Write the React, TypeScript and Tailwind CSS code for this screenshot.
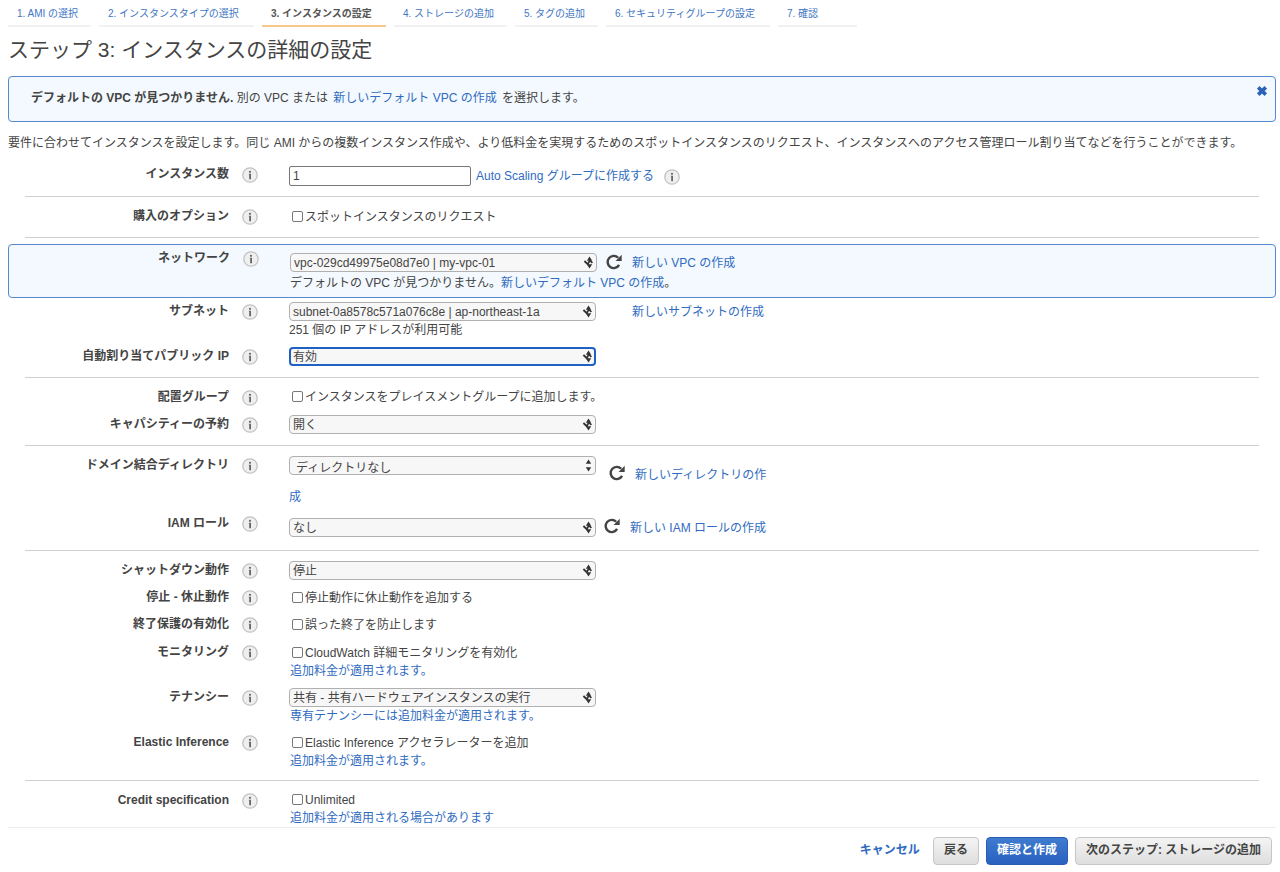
import { useId, type ReactNode } from "react";

const steps = [
  { label: "1. AMI の選択", width: "w-[83px]" },
  { label: "2. インスタンスタイプの選択", width: "w-[155px]" },
  { label: "3. インスタンスの設定", width: "w-[124px]", current: true },
  { label: "4. ストレージの追加", width: "w-[113px]" },
  { label: "5. タグの追加", width: "w-[83px]" },
  { label: "6. セキュリティグループの設定", width: "w-[164px]" },
  { label: "7. 確認", width: "w-[79px]" },
];

function Link({ children, className = "" }: { children: ReactNode; className?: string }) {
  return (
    <a href="#" className={`text-[#2f6bbf] hover:underline ${className}`}>
      {children}
    </a>
  );
}

function InfoButton({ about }: { about: string }) {
  return (
    <button type="button" aria-label={about} className="size-4 shrink-0">
      <svg viewBox="0 0 16 16" className="size-4">
        <circle cx="8" cy="8" r="7.2" fill="#efefef" stroke="#c2c2c2" strokeWidth="1.3" />
        <circle cx="8" cy="4.8" r="1.1" fill="#666" />
        <path d="M6.8 6.8H9V12.2H7.2V7.6H6.8Z" fill="#666" />
      </svg>
    </button>
  );
}

function RefreshButton({ className = "" }: { className?: string }) {
  return (
    <button type="button" aria-label="更新" className={`size-4 shrink-0 ${className}`}>
      <svg viewBox="0 0 16 16" className="size-4">
        <path d="M12.2 3.8A6.1 6.1 0 1 0 13.1 10.9" fill="none" stroke="#444" strokeWidth="2.4" />
        <path d="M15.7 0.8V6.9H9.6Z" fill="#444" />
      </svg>
    </button>
  );
}

function Select({
  id,
  value,
  focused = false,
  plain = false,
  className = "",
}: {
  id: string;
  value: string;
  focused?: boolean;
  plain?: boolean;
  className?: string;
}) {
  return (
    <span className={`relative inline-block h-[19px] w-[307px] shrink-0 ${className}`}>
      <select
        id={id}
        className={`block h-[19px] w-full appearance-none rounded-[4px] bg-[#f7f7f7] pr-5 leading-[15px] ${
          plain ? "pt-1 pl-[6px]" : focused ? "pt-px pl-[2px]" : "pt-[2px] pl-[3px]"
        } ${focused ? "border-2 border-[#1f62c4]" : "border border-[#b0b0b0]"}`}
      >
        <option>{value}</option>
      </select>
      <svg viewBox="0 0 12 14" className="pointer-events-none absolute top-[3px] right-[3px] h-[14px] w-3">
        <path d="M7.5 0.6L10.2 4.8H4.8ZM7.5 12.4L10.2 8.2H4.8Z" fill="#333" />
        {!plain && (
          <path d="M2.4 5L5.8 8.2L7.8 4.4L10.4 6.8" fill="none" stroke="#333" strokeWidth="1.8" />
        )}
      </svg>
    </span>
  );
}

function Checkbox({ id, children }: { id: string; children: ReactNode }) {
  return (
    <span className="flex h-[18px] items-center gap-[2px] pl-[3px]">
      <input
        id={id}
        type="checkbox"
        className="mb-[2px] size-[11px] appearance-none rounded-[2px] border border-[#777] bg-white checked:bg-[#2f6bbf]"
      />
      <label htmlFor={id}>{children}</label>
    </span>
  );
}

function Row({
  label,
  className = "",
  children,
}: {
  label: string;
  className?: string;
  children: (id: string) => ReactNode;
}) {
  const id = useId();
  return (
    <div className={`flex items-start ${className}`}>
      <label htmlFor={id} className="w-[221px] shrink-0 pt-1 text-right font-bold">
        {label}
      </label>
      <div className="flex w-[60px] shrink-0 pt-[6px] pl-[13px]">
        <InfoButton about={label} />
      </div>
      <div className="min-w-0 flex-1">{children(id)}</div>
    </div>
  );
}

function Section({ children }: { children: ReactNode }) {
  return <section className="pb-[7px]">{children}</section>;
}

function Divider() {
  return <hr className="mr-[17px] mb-[6px] ml-[17px] border-[#cfcfcf]" />;
}

export default function App() {
  return (
    <div className="bg-white pr-1 pl-2 font-['Liberation_Sans','Noto_Sans_CJK_JP',sans-serif] text-[12px] leading-[18px] text-[#444]">
      <nav className="flex gap-2 text-[10px]">
        {steps.map((step) => (
          <a
            key={step.label}
            href="#"
            aria-current={step.current ? "step" : undefined}
            className={`h-[27px] border-b-2 pt-[5px] pl-[9px] whitespace-nowrap ${step.width} ${
              step.current ? "border-[#f7c88e] font-bold text-[#555]" : "border-[#f1f1f1] text-[#3f76c4]"
            }`}
          >
            {step.label}
          </a>
        ))}
      </nav>

      <h1 className="pt-2 text-[21px] leading-[30px]">ステップ 3: インスタンスの詳細の設定</h1>

      <div className="mt-[11px] flex h-[46px] items-start justify-between rounded-[4px] border border-[#5488d0] bg-[#f3f9fe]">
        <p className="pt-3 pl-[22px]">
          <strong>デフォルトの VPC が見つかりません.</strong> 別の VPC または{" "}
          <Link className="mx-[2px]">新しいデフォルト VPC の作成</Link> を選択します。
        </p>
        <button type="button" aria-label="閉じる" className="mt-2 mr-[7px] size-3">
          <svg viewBox="0 0 12 12" className="size-3">
            <path d="M2.2 2.4L9.8 9.6M9.8 2.4L2.2 9.6" stroke="#2b63b8" strokeWidth="3.6" />
          </svg>
        </button>
      </div>

      <p className="pt-3 pb-[9px]">
        要件に合わせてインスタンスを設定します。同じ AMI からの複数インスタンス作成や、より低料金を実現するためのスポットインスタンスのリクエスト、インスタンスへのアクセス管理ロール割り当てなどを行うことができます。
      </p>

      <Section>
        <Row label="インスタンス数" className="min-h-[28px]">
          {(id) => (
            <div className="flex items-center pt-[5px]">
              <input
                id={id}
                type="text"
                defaultValue="1"
                className="h-5 w-[182px] rounded-[2px] border border-[#777] px-[3px]"
              />
              <Link className="ml-[5px]">Auto Scaling グループに作成する</Link>
              <span className="ml-[10px] flex pt-[2px]">
                <InfoButton about="Auto Scaling グループ" />
              </span>
            </div>
          )}
        </Row>
      </Section>

      <Divider />
      <Section>
        <Row label="購入のオプション" className="min-h-[27px]">
          {(id) => (
            <div className="pt-[5px]">
              <Checkbox id={id}>スポットインスタンスのリクエスト</Checkbox>
            </div>
          )}
        </Row>
      </Section>

      <Divider />
      <div className="rounded-[4px] border border-[#5488d0] bg-[#f3f9fe]">
        <Row label="ネットワーク" className="min-h-[52px]">
          {(id) => (
            <div className="pt-2">
              <div className="flex h-[19px] items-center">
                <Select id={id} value="vpc-029cd49975e08d7e0 | my-vpc-01" />
                <RefreshButton className="mb-[2px] ml-[9px]" />
                <Link className="ml-[10px]">新しい VPC の作成</Link>
              </div>
              <p className="pt-[2px]">
                デフォルトの VPC が見つかりません。
                <Link>新しいデフォルト VPC の作成</Link>。
              </p>
            </div>
          )}
        </Row>
      </div>
      <Section>
        <Row label="サブネット" className="min-h-[45px]">
          {(id) => (
            <div className="pt-1">
              <div className="flex h-[19px] items-center">
                <Select id={id} value="subnet-0a8578c571a076c8e | ap-northeast-1a" />
                <Link className="ml-9">新しいサブネットの作成</Link>
              </div>
              <p>251 個の IP アドレスが利用可能</p>
            </div>
          )}
        </Row>
        <Row label="自動割り当てパブリック IP" className="min-h-[27px]">
          {(id) => (
            <div className="flex pt-1">
              <Select id={id} value="有効" focused />
            </div>
          )}
        </Row>
      </Section>

      <Divider />
      <Section>
        <Row label="配置グループ" className="min-h-[27px]">
          {(id) => (
            <div className="pt-1">
              <Checkbox id={id}>インスタンスをプレイスメントグループに追加します。</Checkbox>
            </div>
          )}
        </Row>
        <Row label="キャパシティーの予約" className="min-h-[27px]">
          {(id) => (
            <div className="flex pt-1">
              <Select id={id} value="開く" />
            </div>
          )}
        </Row>
      </Section>

      <Divider />
      <Section>
        <Row label="ドメイン結合ディレクトリ" className="min-h-[58px]">
          {(id) => (
            <div className="max-w-[482px] pt-1 leading-[22px]">
              <Select id={id} value="ディレクトリなし" plain className="mb-[11px] align-bottom" />
              <RefreshButton className="mr-[10px] mb-[5px] ml-[13px] align-bottom" />
              <Link>新しいディレクトリの作成</Link>
            </div>
          )}
        </Row>
        <Row label="IAM ロール" className="min-h-[33px]">
          {(id) => (
            <div className="flex items-center pt-2">
              <Select id={id} value="なし" />
              <RefreshButton className="mb-[3px] ml-2" />
              <Link className="ml-[10px]">新しい IAM ロールの作成</Link>
            </div>
          )}
        </Row>
      </Section>

      <Divider />
      <Section>
        <Row label="シャットダウン動作" className="min-h-[27px]">
          {(id) => (
            <div className="flex pt-1">
              <Select id={id} value="停止" />
            </div>
          )}
        </Row>
        <Row label="停止 - 休止動作" className="min-h-[27px]">
          {(id) => (
            <div className="pt-[5px]">
              <Checkbox id={id}>停止動作に休止動作を追加する</Checkbox>
            </div>
          )}
        </Row>
        <Row label="終了保護の有効化" className="min-h-[28px]">
          {(id) => (
            <div className="pt-[5px]">
              <Checkbox id={id}>誤った終了を防止します</Checkbox>
            </div>
          )}
        </Row>
        <Row label="モニタリング" className="min-h-[45px]">
          {(id) => (
            <div className="pt-[5px]">
              <Checkbox id={id}>CloudWatch 詳細モニタリングを有効化</Checkbox>
              <Link className="block pl-px">追加料金が適用されます。</Link>
            </div>
          )}
        </Row>
        <Row label="テナンシー" className="min-h-[45px]">
          {(id) => (
            <div className="pt-1">
              <div className="flex">
                <Select id={id} value="共有 - 共有ハードウェアインスタンスの実行" />
              </div>
              <Link className="block pl-px">専有テナンシーには追加料金が適用されます。</Link>
            </div>
          )}
        </Row>
        <Row label="Elastic Inference" className="min-h-[44px]">
          {(id) => (
            <div className="pt-[5px]">
              <Checkbox id={id}>Elastic Inference アクセラレーターを追加</Checkbox>
              <Link className="block pl-px">追加料金が適用されます。</Link>
            </div>
          )}
        </Row>
      </Section>

      <Divider />
      <Row label="Credit specification">
        {(id) => (
          <div className="pt-1">
            <Checkbox id={id}>Unlimited</Checkbox>
            <Link className="block pl-px">追加料金が適用される場合があります</Link>
          </div>
        )}
      </Row>

      <footer className="flex items-center justify-end gap-[7px] border-t border-[#ececec] pt-[9px] pr-1 font-bold">
        <Link className="mr-[6px] mb-[2px]">キャンセル</Link>
        <button
          type="button"
          className="h-7 rounded-[4px] border border-[#c6c6c6] bg-linear-to-b from-[#f4f4f4] to-[#dedede] px-[10px] pb-[2px]"
        >
          戻る
        </button>
        <button
          type="button"
          className="h-7 rounded-[4px] border border-[#2a5db0] bg-linear-to-b from-[#3f7bd0] to-[#2861bf] px-[10px] pb-[2px] text-white"
        >
          確認と作成
        </button>
        <button
          type="button"
          className="h-7 rounded-[4px] border border-[#c6c6c6] bg-linear-to-b from-[#f4f4f4] to-[#dedede] px-[10px] pb-[2px]"
        >
          次のステップ: ストレージの追加
        </button>
      </footer>
    </div>
  );
}
